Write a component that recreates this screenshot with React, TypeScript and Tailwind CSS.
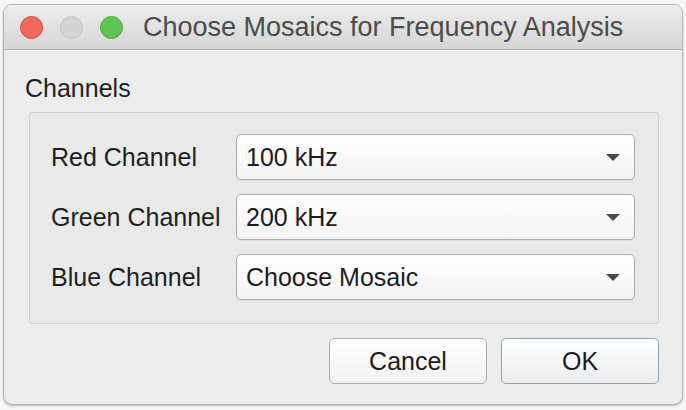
const font = { fontFamily: '"Liberation Sans", Arial, sans-serif' };

type ComboProps = {
  value: string;
};

const Combo = ({ value }: ComboProps) => (
  <div className="flex h-[46px] w-[399px] items-center justify-between rounded-[5px] border border-[#ababab] bg-gradient-to-b from-[#ffffff] to-[#f3f3f3] pl-[9px] pr-[14px] shadow-[0_1px_0_rgba(0,0,0,0.04)]">
    <span className="text-[25px] leading-none text-[#1c1c1c]">{value}</span>
    <svg width="14" height="7" viewBox="0 0 14 7" className="mt-[1px]">
      <path d="M0 0 L14 0 L7 7 Z" fill="#4a4a4a" />
    </svg>
  </div>
);

type RowProps = {
  label: string;
  value: string;
};

const Row = ({ label, value }: RowProps) => (
  <div className="flex items-center">
    <span className="w-[185px] text-[25px] leading-none text-[#1e1e1e]">{label}</span>
    <Combo value={value} />
  </div>
);

type ButtonProps = {
  children: React.ReactNode;
  primary?: boolean;
};

const Button = ({ children, primary = false }: ButtonProps) => (
  <button
    className={
      primary
        ? "flex h-[46px] w-[158px] items-center justify-center rounded-[5px] border border-[#8aa6b5] bg-gradient-to-b from-[#ffffff] to-[#ebeced] text-[25px] leading-none text-[#1c1c1c]"
        : "flex h-[46px] w-[158px] items-center justify-center rounded-[5px] border border-[#adadad] bg-gradient-to-b from-[#ffffff] to-[#f1f1f1] text-[25px] leading-none text-[#1c1c1c]"
    }
  >
    {children}
  </button>
);

export default function App() {
  return (
    <div className="h-[410px] w-[686px] bg-[#f6f6f6] px-[3px] pb-[5px] pt-[4px]" style={font}>
      <div className="flex h-full flex-col overflow-hidden rounded-[9px] border border-[#b2b2b2] bg-[#ececec] shadow-[0_1px_2px_rgba(0,0,0,0.25)]">
        <div className="flex h-[45px] items-center border-b border-[#b4b4b4] bg-gradient-to-b from-[#ececec] to-[#d6d6d6] pl-[16px]">
          <div className="flex gap-[17px]">
            <span className="h-[23px] w-[23px] rounded-full border border-[#e0443e] bg-[#ee6a5f]" />
            <span className="h-[23px] w-[23px] rounded-full border border-[#c4c4c4] bg-[#d4d4d4]" />
            <span className="h-[23px] w-[23px] rounded-full border border-[#4fa83c] bg-[#60c453]" />
          </div>
          <span className="ml-[20px] mt-[1px] text-[27px] leading-none text-[#4b4b4b]">Choose Mosaics for Frequency Analysis</span>
        </div>

        <div className="flex flex-col pl-[25px] pr-[23px]">
          <span className="ml-[-4px] mt-[23px] text-[25px] leading-[30px] text-[#1e1e1e]">Channels</span>
          <div className="mt-[9px] flex flex-col gap-[14px] rounded-[3px] border border-[#d0d0d0] bg-[#e9e9e9] pb-[23px] pl-[21px] pr-[23px] pt-[21px]">
            <Row label="Red Channel" value="100 kHz" />
            <Row label="Green Channel" value="200 kHz" />
            <Row label="Blue Channel" value="Choose Mosaic" />
          </div>
          <div className="mt-[14px] flex justify-end gap-[14px]">
            <Button>Cancel</Button>
            <Button primary>OK</Button>
          </div>
        </div>
      </div>
    </div>
  );
}
